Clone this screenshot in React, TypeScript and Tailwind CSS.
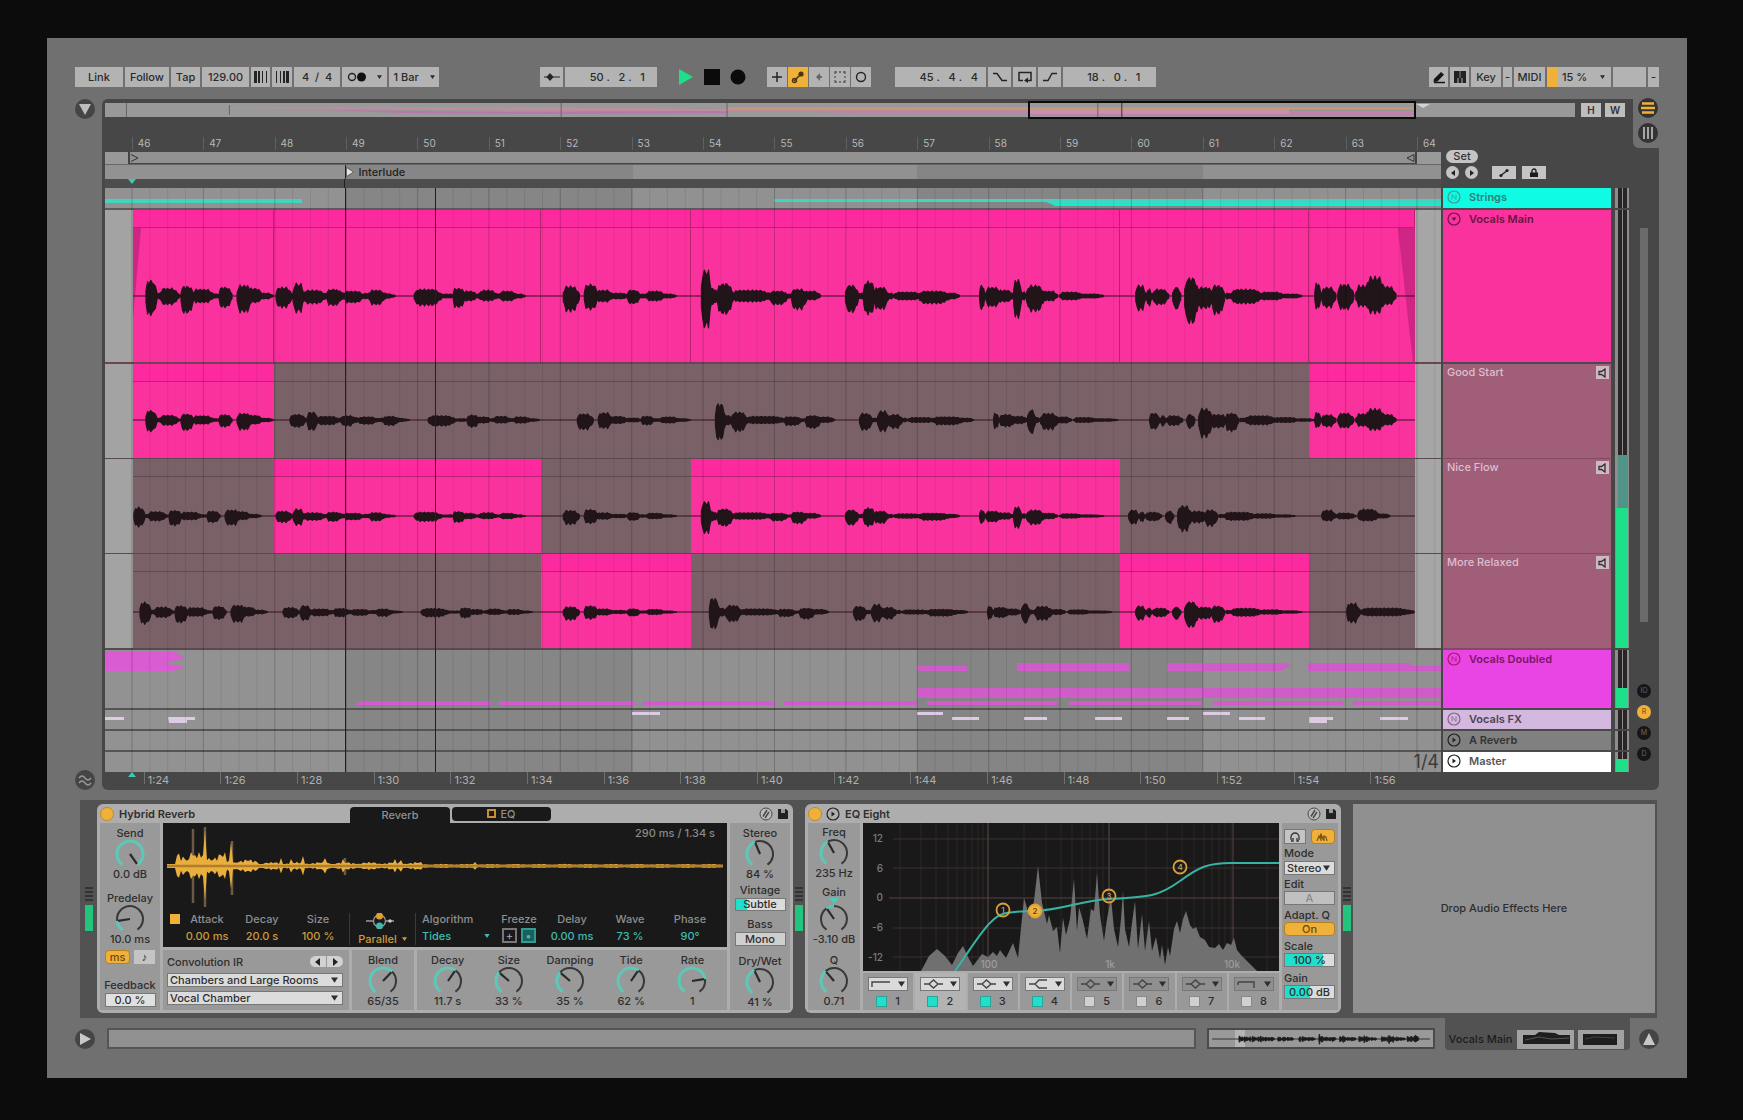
import type { ReactNode } from 'react'
import { clsx } from 'clsx'

const TEAL = '#5cc9b8'
const ORANGE = '#f0b13a'

// Timeline geometry, in units of the arrangement view
const VIEW = 1336
const BAR = 1285 / 18
const FIRST_BAR = 27
const BARS = Array.from({ length: 19 }, (_, i) => 46 + i)
const TIMES = ['1:24', '1:26', '1:28', '1:30', '1:32', '1:34', '1:36', '1:38', '1:40', '1:42', '1:44', '1:46', '1:48', '1:50', '1:52', '1:54', '1:56']

// start, end, height above the centre line, height below it
type Burst = [number, number, number, number]

const MAIN: Burst[] = [
  [13, 24, 16, 20], [23, 48, 3, 3], [27, 46, 8, 9], [48, 61, 10, 18], [60, 81, 7, 7], [80, 88, 2, 2], [86, 99, 9, 12], [104, 119, 11, 17], [112, 130, 8, 7], [126, 140, 3, 3],
  [143, 159, 9, 12], [160, 171, 13, 17], [170, 193, 6, 8], [192, 214, 5, 5], [194, 208, 7, 10], [211, 231, 5, 7], [228, 262, 3, 3], [236, 252, 6, 9],
  [281, 309, 7, 10], [308, 322, 2, 2], [320, 332, 8, 12], [330, 344, 5, 5], [343, 370, 3, 3], [346, 364, 6, 5], [366, 384, 5, 5], [380, 392, 2, 2],
  [430, 446, 10, 16], [451, 465, 12, 14], [463, 480, 6, 6], [478, 495, 3, 3], [494, 507, 6, 8], [506, 516, 2, 2], [513, 532, 5, 5], [528, 543, 2, 2],
  [568, 578, 27, 33], [576, 584, 8, 9], [584, 600, 13, 19], [598, 640, 6, 6], [636, 655, 5, 9], [654, 662, 2, 2], [658, 674, 7, 14], [670, 687, 5, 4],
  [712, 725, 11, 17], [724, 732, 3, 3], [730, 742, 15, 19], [741, 755, 9, 14], [755, 760, 3, 3], [760, 790, 4, 4], [785, 818, 5, 8], [812, 826, 3, 3],
  [846, 851, 11, 14], [852, 868, 9, 11], [864, 880, 6, 6], [880, 888, 17, 23], [887, 893, 4, 4], [893, 911, 11, 16], [909, 924, 5, 5], [926, 950, 4, 4], [945, 970, 2, 2],
  [1002, 1012, 11, 15], [1013, 1018, 7, 10], [1019, 1035, 7, 9], [1039, 1047, 9, 14], [1051, 1065, 19, 29], [1063, 1080, 9, 13], [1078, 1091, 11, 19], [1092, 1098, 3, 3], [1097, 1130, 7, 8], [1126, 1152, 4, 4], [1148, 1168, 2, 2],
  [1181, 1187, 13, 13], [1188, 1202, 9, 12], [1204, 1220, 12, 14], [1222, 1244, 11, 11], [1232, 1252, 20, 18], [1246, 1262, 10, 9],
]

function take(from: number, to: number, shift: number, gain: number): Burst[] {
  return MAIN.filter(b => b[0] >= from && b[0] < to).map(([s, e, u, d]) => [Math.max(0, s + shift), e + shift, u * gain, d * gain])
}

const GOOD: Burst[] = [...take(0, 141, 0, 0.6), ...take(141, 1170, 14, 0.62), ...take(1170, 1281, 0, 0.58)]
const NICE: Burst[] = [...take(0, 141, -12, 0.55), ...take(141, 1000, 0, 0.55), ...take(1000, 1170, -7, 0.55), [1188, 1202, 6, 5], [1202, 1222, 3, 3], [1224, 1246, 7, 5], [1244, 1256, 2, 2]]
const RELAXED: Burst[] = [...take(0, 141, -6, 0.62), ...take(141, 400, 7, 0.5), ...take(400, 560, 0, 0.52), ...take(560, 1000, 8, 0.52), ...take(1000, 1170, 0, 0.55), [1213, 1226, 9, 11], [1225, 1280, 4, 4]]

function wavePath(bursts: Burst[], mid: number) {
  return bursts.map(([s, e, up, down]) => {
    const n = Math.max(5, Math.round((e - s) / 1.5))
    const at = (i: number) => {
      const t = i / n
      const env = Math.min(1, t / 0.2 + 0.35, (1 - t) / 0.4 + 0.25)
      return env * (0.84 + 0.16 * Math.sin(i * 2.3 + s))
    }
    const xs = Array.from({ length: n + 1 }, (_, i) => i)
    const top = xs.map(i => `${(s + ((e - s) * i) / n).toFixed(1)},${(mid - up * at(i)).toFixed(1)}`)
    const bottom = xs.map(i => `${(s + ((e - s) * i) / n).toFixed(1)},${(mid + down * at(i)).toFixed(1)}`).reverse()
    return `M${[...top, ...bottom].join('L')}Z`
  }).join('')
}

const EDGES = [0, 141, 408, 558, 986, 1175, 1281]

function Caret({ className = 'w-[8px] h-[6px]' }: { className?: string }) {
  return <svg viewBox="0 0 8 6" className={clsx('shrink-0', className)}><path d="M0 0h8L4 6z" fill="currentColor" /></svg>
}

function Chip({ className, children, label }: { className?: string; children?: ReactNode; label?: string }) {
  return (
    <button aria-label={label} className={clsx('h-5 shrink-0 flex items-center justify-center whitespace-pre bg-[#b3b3b3] text-[#2b2b2b]', className)}>
      {children}
    </button>
  )
}

function Toolbar() {
  return (
    <header className="flex items-center px-7 text-[11px] font-medium">
      <div className="flex gap-[2px]">
        <Chip className="w-12">Link</Chip>
        <Chip className="w-11">Follow</Chip>
        <Chip className="w-[29px]">Tap</Chip>
        <Chip className="w-[47px]">129.00</Chip>
        <Chip className="w-[19px]" label="Nudge down">
          <svg viewBox="0 0 15 12" className="w-[15px] h-3" fill="#242424"><path d="M1 0h3v12H1zM5 0h2v12H5zM9 0h1v12H9zM13 0h1v12h-1z" /></svg>
        </Chip>
        <Chip className="w-5" label="Nudge up">
          <svg viewBox="0 0 15 12" className="w-[15px] h-3" fill="#242424"><path d="M1 0h1v12H1zM5 0h1v12H5zM8 0h2v12H8zM11 0h3v12h-3z" /></svg>
        </Chip>
        <Chip className="w-[46px]">4  /  4</Chip>
        <Chip className="w-[45px] gap-[10px]" label="Metronome">
          <svg viewBox="0 0 20 10" className="w-5 h-[10px]"><circle cx="5" cy="5" r="3.500" fill="none" stroke="#242424" strokeWidth="1.400" /><circle cx="14.500" cy="5" r="4.500" fill="#111" /></svg>
          <Caret className="w-[5px] h-1" />
        </Chip>
        <Chip className="w-[50px] gap-2">1 Bar <Caret className="w-[5px] h-1" /></Chip>
      </div>

      <div className="grow-[26]" />

      <div className="flex items-center">
        <div className="flex gap-[2px]">
          <Chip className="w-[23px]" label="Follow playhead">
            <svg viewBox="0 0 18 10" className="w-[18px] h-[10px]" fill="#242424"><path d="M1 4.500h16v1H1z" /><path d="M7 1l3.600 4L7 9 3.400 5z" /></svg>
          </Chip>
          <Chip className="w-[92px] pl-3">50 .   2 .   1</Chip>
        </div>
        <div className="flex items-center gap-[10px] px-[21px]">
          <button aria-label="Play"><svg viewBox="0 0 16 16" className="block w-4 h-4"><path d="M1 0l14 8-14 8z" fill="#1ee08a" /></svg></button>
          <button aria-label="Stop"><svg viewBox="0 0 16 16" className="block w-4 h-4"><path d="M0 0h16v16H0z" fill="#0b0b0b" /></svg></button>
          <button aria-label="Record"><svg viewBox="0 0 16 16" className="block w-4 h-4"><circle cx="8" cy="8" r="7.500" fill="#0b0b0b" /></svg></button>
        </div>
        <div className="flex gap-[1px]">
          <Chip className="w-5" label="Overdub"><svg viewBox="0 0 12 12" className="w-3 h-3"><path d="M6 1v10M1 6h10" stroke="#242424" strokeWidth="1.500" /></svg></Chip>
          <Chip className="w-5 !bg-[#f0b13a]" label="Automation arm">
            <svg viewBox="0 0 14 14" className="w-[14px] h-[14px]"><path d="M3 11l8-8" stroke="#4a3510" strokeWidth="1.600" /><circle cx="3.500" cy="10.500" r="2" fill="none" stroke="#4a3510" strokeWidth="1.500" /><circle cx="10" cy="4" r="2.600" fill="#4a3510" /></svg>
          </Chip>
          <Chip className="w-5" label="Re-enable automation"><svg viewBox="0 0 10 10" className="w-[10px] h-[10px]"><path d="M6 1v8L2 5z M6 4h2v2H6z" fill="#666" /></svg></Chip>
          <Chip className="w-5" label="Capture">
            <svg viewBox="0 0 12 12" className="w-3 h-3" fill="none" stroke="#555" strokeWidth="1.300"><path d="M1 3V1h2M9 1h2v2M11 9v2H9M3 11H1V9M5 1h2M5 11h2M1 5v2M11 5v2" /></svg>
          </Chip>
          <Chip className="w-5" label="Session record"><svg viewBox="0 0 12 12" className="w-3 h-3"><circle cx="6" cy="6" r="4.500" fill="none" stroke="#242424" strokeWidth="1.400" /></svg></Chip>
        </div>
        <div className="flex gap-[2px] pl-6">
          <Chip className="w-[91px] pl-4">45 .   4 .   4</Chip>
          <Chip className="w-[23px]" label="Punch in"><svg viewBox="0 0 14 10" className="w-[14px] h-[10px]"><path d="M0 1.500h4l5 7h5" fill="none" stroke="#242424" strokeWidth="1.400" /></svg></Chip>
          <Chip className="w-[23px]" label="Loop"><svg viewBox="0 0 14 12" className="w-[14px] h-3"><path d="M5 9.500H1v-8h12v8h-3" fill="none" stroke="#242424" strokeWidth="1.500" /><path d="M10 6.500v5.500L6 9.500z" fill="#242424" /></svg></Chip>
          <Chip className="w-[23px]" label="Punch out"><svg viewBox="0 0 14 10" className="w-[14px] h-[10px]"><path d="M0 8.500h5l4-7h5" fill="none" stroke="#242424" strokeWidth="1.400" /></svg></Chip>
          <Chip className="w-[93px] pl-2">18 .   0 .   1</Chip>
        </div>
      </div>

      <div className="grow-[70]" />

      <div className="flex gap-[2px]">
        <Chip className="w-[19px]" label="Draw mode"><svg viewBox="0 0 14 14" className="w-[14px] h-[14px]"><path d="M2 9l7-7 3 2.500-6.500 7L1.500 12z" fill="#161616" /><path d="M2 12.500h11" stroke="#161616" strokeWidth="1.500" /></svg></Chip>
        <Chip className="w-[19px]" label="Computer keyboard"><svg viewBox="0 0 14 12" className="w-[14px] h-3"><path d="M1 0h12v12H1z" fill="#222" /><path d="M5 7v5M9 7v5" stroke="#b3b3b3" /><path d="M7 0v7" stroke="#8a8a8a" /></svg></Chip>
        <Chip className="w-[30px]">Key</Chip>
        <Chip className="w-[9px]">-</Chip>
        <Chip className="w-[31px]">MIDI</Chip>
        <Chip className="w-[64px] !justify-start gap-1 pr-[6px]">
          <span className="h-5 w-[11px] bg-[#f0b13a]" />
          <span className="grow text-left">15 %</span>
          <Caret className="w-[5px] h-1" />
        </Chip>
        <Chip className="w-[33px]" label="MIDI activity" />
        <Chip className="w-[11px]">-</Chip>
      </div>
    </header>
  )
}

function RoundButton({ label, children, className }: { label: string; children: ReactNode; className?: string }) {
  return (
    <button aria-label={label} className={clsx('w-5 h-5 shrink-0 rounded-full bg-[#454545] flex items-center justify-center', className)}>
      {children}
    </button>
  )
}

function Overview() {
  return (
    <div className="flex items-start">
      <div className="relative flex-1 h-[14px] bg-[#999]">
        <svg viewBox="0 0 1471 14" preserveAspectRatio="none" className="block w-full h-full">
          <path d="M124 4H456L622 6H925V8H456L124 5z" fill="#c48aa0" opacity=".8" />
          <path d="M220 7L400 9L622 8V10L456 11L300 10z" fill="#c566b4" opacity=".7" />
          <path d="M622 4.500H1310V6H622z" fill="#cf9a7a" />
          <path d="M700 9L925 8V11H800zM925 8H1310V12H925z" fill="#c67db0" opacity=".8" />
          <path d="M925 6h260v5H925z" fill="#cf94ab" opacity=".7" />
          <path d="M21.500 0v14M124.500 2v10M456.500 0v14M622.500 0v14M993.500 0v14" stroke="#666" />
          <path d="M1017.500 0v14" stroke="#333" />
          <path d="M1312 1h14l-7 4z" fill="#d2d2d2" />
        </svg>
        <div className="absolute -top-[2px] h-[18px] left-[62.800%] w-[26.400%] border-2 border-[#0b0b0b]" />
      </div>
      <div className="flex gap-1 pl-[6px] pr-2 text-[10px] leading-[14px] font-semibold text-[#333]">
        <button className="w-5 bg-[#bdbdbd]">H</button>
        <button className="w-5 bg-[#bdbdbd]">W</button>
      </div>
    </div>
  )
}

function Ruler() {
  return (
    <div className="flex h-[15px] text-[10px] leading-[13px] text-[#b8b8b8]">
      <div className="w-[2%] shrink-0" />
      {BARS.map(n => (
        <div key={n} className="shrink-0 w-[5.345%] h-[13px] border-l border-[#606060] pl-[5px]">{n}</div>
      ))}
    </div>
  )
}

function Notes({ height, className, children }: { height: number; className?: string; children?: ReactNode }) {
  return (
    <svg viewBox={`0 0 ${VIEW} ${height}`} preserveAspectRatio="none" className={clsx('block flex-1 h-full', className)}>
      {children}
    </svg>
  )
}

interface LaneProps {
  bursts: Burst[]
  main?: boolean
  active?: number[]
  height: number
  mid: number
}

function Lane({ bursts, main, active = [], height, mid }: LaneProps) {
  return (
    <div className="flex h-full bg-[#a3a3a3]">
      <div className="w-[2.100%] shrink-0" />
      <div className="relative flex flex-1">
        {EDGES.slice(0, -1).map((edge, i) => {
          const on = main || active.includes(i)
          return (
            <div key={edge} style={{ width: `${((EDGES[i + 1] - edge) / 1281) * 100}%` }} className={clsx('h-full', on ? 'bg-[#fa329d]' : 'bg-[#7a6168]', main && 'border-r border-[#b8226f]')}>
              <div className={clsx('h-[18px] border-b', on ? 'bg-[#fd2a9f] border-[#b92375]' : 'border-[#5f4c52]')} />
            </div>
          )
        })}
        <svg viewBox={`0 0 1281 ${height}`} preserveAspectRatio="none" className="absolute inset-0 w-full h-full">
          {main && <path d={`M0 18h8L0 110zM1264 18h17V${height}h-2z`} fill="#cf2686" />}
          <path d={`M0 ${mid}H1281`} stroke="#35101f" strokeWidth="1.200" />
          <path d={wavePath(bursts, mid)} fill="#211519" stroke="#211519" strokeWidth="1.200" strokeLinejoin="round" />
        </svg>
      </div>
      <div className="w-[1.950%] shrink-0 bg-[#a6a6a6]" />
    </div>
  )
}

function Grid() {
  const x = (bar: number) => FIRST_BAR + (bar - 46) * BAR
  const beats = Array.from({ length: 74 }, (_, i) => FIRST_BAR + (i * BAR) / 4)
  return (
    <svg viewBox={`0 0 ${VIEW} 100`} preserveAspectRatio="none" className="absolute inset-0 w-full h-full pointer-events-none">
      <path d={beats.map(b => `M${b.toFixed(1)} 0V100`).join('')} stroke="#000" strokeOpacity=".08" />
      <path d={BARS.map(b => `M${x(b).toFixed(1)} 0V100`).join('')} stroke="#000" strokeOpacity=".12" />
      <path d="M240.500 0V100M330.500 0V100" stroke="#2a1d22" />
    </svg>
  )
}

function TimelineLanes() {
  return (
    <div className="relative bg-[linear-gradient(90deg,#929292_18%,#868686_18%_39.500%,#919191_39.500%_60.800%,#858585_60.800%_82.200%,#919191_82.200%)]">
      <div className="h-[22px] flex border-b-2 border-[#5a5a5a]">
        <Notes height={20}>
          <path d="M0 11h197v4H0zM669 11h277v3H669zM941 11h395v7H951l-10-4z" fill="#3fd6bf" />
          <path d="M946 15h390v3H950z" fill="#10ecd6" />
        </Notes>
      </div>
      <div className="h-[154px] border-b-2 border-[#6b4457]"><Lane main bursts={MAIN} height={152} mid={86} /></div>
      <div className="h-[95px] border-b border-[#5a4a50]"><Lane bursts={GOOD} active={[0, 5]} height={94} mid={56} /></div>
      <div className="h-[95px] border-b border-[#5a4a50]"><Lane bursts={NICE} active={[1, 3]} height={94} mid={57} /></div>
      <div className="h-[96px] border-b-2 border-[#5a4a50]"><Lane bursts={RELAXED} active={[2, 4]} height={94} mid={58} /></div>
      <div className="h-[60px] flex border-b-2 border-[#555]">
        <Notes height={58}>
          <path d="M0 1h68l12 7-20 5 20 4-12 4H0z" fill="#d95cd2" />
          <path d="M250 54l8-3h128v4H250zM394 51h136v4H394zM538 51h132v4H538zM678 51h134v4H678zM822 51h130v4H822zM964 51h132v4H964zM1108 51h130v4H1108zM1248 51h88v4h-88z" fill="#d55ace" />
          <path d="M812 16h50v5h-50zM912 13h112v8H912zM1062 13h116l8 2-10 6h-114zM1203 13h103v3h30v5h-133zM812 38h524v10H812z" fill="#cf5cc8" />
        </Notes>
      </div>
      <div className="h-[21px] flex border-b-2 border-[#555]">
        <Notes height={19}>
          <path d="M0 7h19v3H0zM63 7h27v3h-8v3H64zM527 2h28v3h-28zM812 2h26v3h-26zM847 7h27v3h-27zM919 7h23v3h-23zM990 7h27v3h-27zM1062 7h22v3h-22zM1098 2h27v3h-27zM1134 7h26v3h-26zM1204 7h24v3h-6v3h-18zM1275 7h28v3h-28z" fill="#dccbe2" />
        </Notes>
      </div>
      <div className="h-[21px] border-b-2 border-[#555]" />
      <div className="h-5 text-right text-[18px] leading-5 text-[#3c3c3c] pr-[2px]">1/4</div>
      <Grid />
    </div>
  )
}

function TrackIcon({ kind, color = '#222' }: { kind: 'unfold' | 'wave' | 'play'; color?: string }) {
  return (
    <svg viewBox="0 0 14 14" className="w-[14px] h-[14px] shrink-0" fill="none" stroke={color}>
      <circle cx="7" cy="7" r="6" strokeWidth="1.200" />
      {kind === 'unfold' && <path d="M4.500 5.500h5L7 9z" fill={color} stroke="none" />}
      {kind === 'play' && <path d="M5.500 4.500v5L9 7z" fill={color} stroke="none" />}
      {kind === 'wave' && <path d="M5 4.500v5M5 4.500l4 5M9 4.500v5" strokeWidth=".8" />}
    </svg>
  )
}

function TrackHeader({ name, icon, color, className }: { name: string; icon: 'unfold' | 'wave' | 'play'; color?: string; className: string }) {
  return (
    <div className={clsx('flex items-start gap-2 pl-1 pt-[1px] border-[#4a4a4a] text-[11px] leading-[16px] font-semibold', className)}>
      <button aria-label={`Unfold ${name}`} className="pt-[1px]"><TrackIcon kind={icon} color={color} /></button>
      <span>{name}</span>
    </div>
  )
}

function TakeHeader({ name, className }: { name: string; className: string }) {
  return (
    <div className={clsx('flex items-start justify-between pl-1 pr-[2px] bg-[#a05e78] border-[#804a62] text-[11px] leading-[16px] font-medium text-[#dcbfd0]', className)}>
      <span>{name}</span>
      <button aria-label={`Audition ${name}`} className="w-[13px] h-[13px] mt-[2px] bg-[#cdb9c2] flex items-center justify-center">
        <svg viewBox="0 0 10 10" className="w-[10px] h-[10px]"><path d="M1 3.500h2.500L7 1v8L3.500 6.500H1z" fill="none" stroke="#3b2a32" strokeWidth="1.300" /></svg>
      </button>
    </div>
  )
}

function Meter({ className, level = 0, peak = 0 }: { className: string; level?: number; peak?: number }) {
  return (
    <div className={clsx('border-[#474747]', className)}>
      <div className="relative h-full bg-[#8d8d8d] pl-[3px] pr-[2px] flex gap-[1px]">
        <span className="flex-1 bg-[#2a2424]" />
        <span className="flex-1 bg-[#2a2424]" />
        <span style={{ height: `${peak}%` }} className="absolute bottom-0 left-[3px] right-[1px] bg-[#4f9486]" />
        <span style={{ height: `${level}%` }} className="absolute bottom-0 inset-x-[1px] bg-[#1ee08a]" />
      </div>
    </div>
  )
}

function TrackHeaders() {
  return (
    <div className="w-[168px] shrink-0">
      <div className="h-9 flex flex-col items-start gap-[3px] pl-[3px]">
        <button className="h-[13px] w-8 -mt-[2px] rounded-full bg-[#c4c4c4] text-[11px] leading-[13px] font-medium text-[#333]">Set</button>
        <div className="flex items-center">
          {['Previous', 'Next'].map((n, i) => (
            <button key={n} aria-label={`${n} locator`} className="w-[13px] h-[13px] mr-[6px] rounded-full bg-[#c4c4c4] flex items-center justify-center">
              <svg viewBox="0 0 8 8" className="w-2 h-2"><path d={i ? 'M2 1l4 3-4 3z' : 'M6 1L2 4l4 3z'} fill="#222" /></svg>
            </button>
          ))}
          <button aria-label="Automation mode" className="w-6 h-[13px] ml-2 bg-[#c4c4c4] flex items-center justify-center">
            <svg viewBox="0 0 12 10" className="w-3 h-[10px]"><path d="M2 8l8-6" stroke="#222" strokeWidth="1.300" /><circle cx="3" cy="7.500" r="1.600" fill="#222" /><circle cx="9" cy="2.500" r="1.600" fill="#222" /></svg>
          </button>
          <button aria-label="Lock envelopes" className="w-6 h-[13px] ml-[6px] bg-[#c4c4c4] flex items-center justify-center">
            <svg viewBox="0 0 10 10" className="w-[10px] h-[10px]"><path d="M1 4.500h8V9H1z" fill="#1c1c1c" /><path d="M3 5V3a2 2 0 014 0v2" fill="none" stroke="#1c1c1c" strokeWidth="1.300" /></svg>
          </button>
        </div>
      </div>
      <TrackHeader name="Strings" icon="wave" color="#3f9c90" className="h-[22px] border-b-2 bg-[#10fbe4] text-[#2c8078]" />
      <TrackHeader name="Vocals Main" icon="unfold" color="#6c1444" className="h-[154px] border-b-2 bg-[#fa329d] text-[#6c1444]" />
      <TakeHeader name="Good Start" className="h-[95px] border-b" />
      <TakeHeader name="Nice Flow" className="h-[95px] border-b" />
      <TakeHeader name="More Relaxed" className="h-[96px] border-b-2" />
      <TrackHeader name="Vocals Doubled" icon="wave" color="#a8186c" className="h-[60px] border-b-2 bg-[#e945e4] text-[#7c1668]" />
      <TrackHeader name="Vocals FX" icon="wave" color="#8a5f86" className="h-[21px] border-b-2 bg-[#d3b9e0] text-[#4e4353]" />
      <TrackHeader name="A Reverb" icon="play" className="h-[21px] border-b-2 bg-[#808080] text-[#333]" />
      <TrackHeader name="Master" icon="play" className="h-5 bg-white text-[#555]" />
    </div>
  )
}

function Arrangement() {
  return (
    <section className="flex pl-7 pr-7 mt-3">
      <div className="w-[27px] shrink-0 flex flex-col justify-between">
        <RoundButton label="Hide browser">
          <svg viewBox="0 0 12 12" className="w-3 h-3"><path d="M0 1h12L6 12z" fill="#bdbdbd" /></svg>
        </RoundButton>
        <RoundButton label="Follow behaviour">
          <svg viewBox="0 0 14 12" className="w-[14px] h-3" fill="none" stroke="#999" strokeWidth="1.300"><path d="M1 4q3-4 6 0t6 0M1 9q3-4 6 0t6 0" /></svg>
        </RoundButton>
      </div>
      <div className="flex-1 min-w-0 bg-[#474747] rounded-md">
        <div className="flex items-start">
          <div className="flex-1 min-w-0 pl-[3px] pt-[4px]">
            <Overview />
            <div className="mt-5 w-full flex">
              <div className="flex-1 min-w-0"><Ruler /></div>
              <div className="w-[192px] shrink-0" />
            </div>
          </div>
          <div className="w-[26px] h-[49px] shrink-0 pl-[5px] flex flex-col gap-[5px] bg-[#707070] rounded-bl-md">
            <RoundButton label="Arrangement view" className="!bg-[#333] -mt-[1px]">
              <svg viewBox="0 0 14 12" className="w-[14px] h-3"><path d="M1 1.500h12M0 6h14M1 10.500h12" stroke={ORANGE} strokeWidth="2.600" /></svg>
            </RoundButton>
            <RoundButton label="Session view" className="!bg-[#333]">
              <svg viewBox="0 0 12 12" className="w-3 h-3"><path d="M2 0v12M6 0v12M10 0v12" stroke="#a5a5a5" strokeWidth="2" /></svg>
            </RoundButton>
          </div>
        </div>

        <div className="flex pl-[3px]">
          <div className="flex-1 min-w-0">
            <div className="h-3 flex bg-[#999] text-[#333]">
              <div className="w-[1.700%] shrink-0" />
              <div className="flex-1 flex items-center justify-between border-x-2 border-b border-[#444] bg-[#929292]">
                <svg viewBox="0 0 10 10" className="w-[10px] h-[10px]"><path d="M1 1.500L8 5 1 8.500" fill="none" stroke="#333" /></svg>
                <svg viewBox="0 0 10 10" className="w-[10px] h-[10px]"><path d="M9 1.500L2 5l7 3.500z" fill="none" stroke="#333" /></svg>
              </div>
              <div className="w-[1.800%] shrink-0" />
            </div>
            <div className="h-[15px] flex items-center border-t border-[#666] bg-[linear-gradient(90deg,#929292_18%,#868686_18%_39.500%,#919191_39.500%_60.800%,#858585_60.800%_82.200%,#919191_82.200%)]">
              <div className="w-[18%] shrink-0" />
              <div className="h-full flex items-center gap-1 border-l border-[#222] text-[11px] font-medium text-[#222]">
                <svg viewBox="0 0 8 10" className="w-2 h-[10px]"><path d="M.500.500L7.500 5 .500 9.500z" fill="#e4e4e4" stroke="#333" strokeWidth=".6" /></svg>
                Interlude
              </div>
            </div>
            <div className="h-[9px] bg-[#4d4d4d] flex">
              <div className="w-[1.700%] shrink-0" />
              <svg viewBox="0 0 8 5" className="w-2 h-[5px]"><path d="M0 0h8L4 5z" fill="#35cdb8" /></svg>
              <div className="w-[15.700%] shrink-0 border-r border-[#222]" />
            </div>
            <TimelineLanes />
            <div className="h-[18px] flex text-[11px] leading-4 text-[#b0b0b0] overflow-hidden">
              <div className="w-[2.900%] shrink-0 flex justify-center">
                <svg viewBox="0 0 8 5" className="w-2 h-[5px] ml-4"><path d="M0 5h8L4 0z" fill="#35cdb8" /></svg>
              </div>
              {TIMES.map(t => (
                <div key={t} className="w-[5.740%] shrink-0 h-3 border-l border-[#707070] pl-[3px]">{t}</div>
              ))}
            </div>
          </div>
          <div className="w-[2px] shrink-0" />
          <TrackHeaders />
          <div className="w-[14px] ml-1 mt-9 shrink-0">
            <Meter className="h-[22px] border-b-2" />
            <Meter className="h-[440px] border-b-2" level={32} peak={44} />
            <Meter className="h-[60px] border-b-2" level={34} />
            <Meter className="h-[21px] border-b-2" />
            <Meter className="h-[21px] border-b-2" />
            <Meter className="h-5" level={65} />
          </div>
          <div className="w-[30px] shrink-0 flex flex-col items-center pt-[76px] pb-[29px]">
            <div className="w-[8px] h-[394px] bg-[#6b6b6b]" />
            <div className="flex-1" />
            <div className="flex flex-col gap-[7px]">
              {['IO', 'R', 'M', 'D'].map(c => (
                <button key={c} className={clsx('w-[14px] h-[14px] rounded-full text-[7px] leading-[14px] text-center', c === 'R' ? 'bg-[#f0b13a] text-[#6b4a10]' : 'bg-[#161616] text-[#666]')}>{c}</button>
              ))}
            </div>
          </div>
        </div>
      </div>
    </section>
  )
}

function arc(from: number, to: number, r = 13) {
  const p = (a: number) => {
    const rad = ((a - 90) * Math.PI) / 180
    return `${(15 + r * Math.cos(rad)).toFixed(2)} ${(15 + r * Math.sin(rad)).toFixed(2)}`
  }
  return `M${p(from)}A${r} ${r} 0 ${Math.abs(to - from) > 180 ? 1 : 0} 1 ${p(to)}`
}

// value runs 0..1 over 290 degrees of travel
function Knob({ label, text, value, kind }: { label: string; text: string; value: number; kind?: 'bipolar' }) {
  const angle = -145 + value * 290
  const rad = ((angle - 90) * Math.PI) / 180
  return (
    <label className="flex flex-col items-center text-[11px] leading-3 font-medium text-[#2e2e2e] whitespace-nowrap">
      {label}
      <span className="relative block w-[30px] h-[29px]">
        <svg viewBox="0 0 30 29" className="block w-[30px] h-[29px]" fill="none">
          {kind === 'bipolar' ? (
            <>
              <path d={arc(-145, angle)} stroke="#383838" strokeWidth="2" />
              <path d={arc(0, 145)} stroke="#383838" strokeWidth="2" />
              <path d={arc(angle, 0)} stroke="#48cdb8" strokeWidth="2.800" />
            </>
          ) : (
            <>
              {value < 0.98 && <path d={arc(angle, 145)} stroke="#383838" strokeWidth="2" />}
              <path d={arc(-145, angle)} stroke={TEAL} strokeWidth="3" />
            </>
          )}
          <path d={`M15 15L${(15 + 12 * Math.cos(rad)).toFixed(1)} ${(15 + 12 * Math.sin(rad)).toFixed(1)}`} stroke="#2a2a2a" strokeWidth="2.200" />
        </svg>
        <input type="range" min={0} max={1} step={0.01} defaultValue={value} className="absolute inset-0 w-full h-full opacity-0" />
      </span>
      {text}
    </label>
  )
}

function TitleIcons() {
  return (
    <div className="flex items-center gap-1">
      <button aria-label="Hot-swap preset">
        <svg viewBox="0 0 14 14" className="block w-[14px] h-[14px]" fill="none" stroke="#4a4a4a"><circle cx="7" cy="7" r="6" fill="#bbb" /><path d="M4 9.500L8 3M6 11l4-6" strokeWidth="1.500" /></svg>
      </button>
      <button aria-label="Save preset">
        <svg viewBox="0 0 12 12" className="block w-3 h-3"><path d="M1 1h8l2 2v8H1z" fill="#222" /><path d="M4 1h4v4H4z" fill="#999" /></svg>
      </button>
    </div>
  )
}

function irPath() {
  const spikes: Record<number, number> = { 28: 14, 42: 36, 68: 24, 118: 8, 128: 7, 140: 10, 162: 8, 180: 7, 232: 7, 238: 6, 312: 4 }
  let top = ''
  let bottom = ''
  for (let x = 4; x <= 560; x += 2) {
    const noise = Math.abs(Math.sin(x * 1.7) * Math.cos(x * 0.61))
    const body = x < 14 ? 2 : x < 64 ? 5 + noise * 9 : x < 96 ? 3 + noise * 4 : x < 260 ? 1.8 + noise * 2.4 : 1.2 + noise
    const h = spikes[x] ?? body
    top += `L${x} ${(43 - h).toFixed(1)}`
    bottom = `L${x} ${(43 + h * 0.95).toFixed(1)}` + bottom
  }
  return `M4 43${top}${bottom}Z`
}

function Param({ label, value, color, className = 'w-[60px]' }: { label: string; value: ReactNode; color: string; className?: string }) {
  return (
    <div className={clsx('flex flex-col items-center gap-[3px]', className)}>
      <span className="text-[#8e8e8e]">{label}</span>
      <span className={clsx('flex items-center whitespace-nowrap h-[15px]', color)}>{value}</span>
    </div>
  )
}

function DeviceMeter({ className }: { className: string }) {
  return (
    <div className={clsx('shrink-0 flex flex-col items-center pt-[82px]', className)}>
      <svg viewBox="0 0 8 17" className="w-2 h-[17px]"><path d="M0 2h8M0 6h8M0 10h8M0 14h8" stroke="#333" strokeWidth="2" /></svg>
      <div className="mt-[2px] w-[8px] h-[26px] bg-[#22c47e]" />
    </div>
  )
}

function SelectBox({ label, options, className }: { label: string; options: string[]; className?: string }) {
  return (
    <div className={clsx('flex items-center bg-[#dcdcdc] border border-[#777] text-[#2e2e2e]', className)}>
      <select aria-label={label} className="appearance-none flex-1 min-w-0 h-full pl-[2px] bg-transparent outline-none">
        {options.map(o => <option key={o}>{o}</option>)}
      </select>
      <Caret className="w-[7px] h-[6px] mr-1" />
    </div>
  )
}

function HybridReverb() {
  return (
    <article className="w-[696px] shrink-0 rounded-md bg-[#adadad] text-[11px] leading-3 font-medium text-[#2e2e2e]">
      <div className="h-[19px] flex items-center pl-[3px] pr-1">
        <button aria-label="Device on" className="w-[14px] h-[14px] rounded-full bg-[#f0b13a] border border-[#c58a1c]" />
        <h2 className="pl-[5px] w-[236px] font-semibold">Hybrid Reverb</h2>
        <button className="w-[100px] h-4 self-end rounded-t bg-[#191919] text-[#909090]">Reverb</button>
        <button className="ml-[2px] w-[99px] h-[14px] rounded bg-[#191919] text-[#909090] flex items-center justify-center gap-1">
          <span className="w-[9px] h-[9px] border-2 border-[#c98e32]" />EQ
        </button>
        <span className="flex-1" />
        <TitleIcons />
      </div>
      <div className="flex px-[3px] pb-[3px] gap-[3px] h-[190px]">
        <div className="w-[60px] flex flex-col items-center bg-[#999] pt-1">
          <Knob label="Send" text="0.0 dB" value={1} />
          <div className="h-3" />
          <Knob label="Predelay" text="10.0 ms" value={0.16} />
          <div className="flex gap-1 mt-[5px]">
            <button className="w-[25px] h-[14px] leading-[13px] rounded-sm bg-[#f0b13a] border border-[#b5801f] text-[#6b4a10]">ms</button>
            <button className="w-[21px] h-[14px] leading-[13px] bg-[#c4c4c4]">♪</button>
          </div>
          <label htmlFor="feedback" className="mt-[15px]">Feedback</label>
          <input id="feedback" defaultValue="0.0 %" className="mt-[2px] w-[51px] h-[14px] bg-[#e0e0e0] border border-[#777] text-center" />
        </div>

        <div className="w-[564px]">
          <div className="h-[124px] bg-[#191919] flex flex-col">
            <div className="relative h-[90px]">
              <svg viewBox="0 0 564 86" className="block w-[564px] h-[86px]">
                <path d="M30 6v74M42 4v80M69 18v54M182 35v17" stroke="#8f7658" strokeWidth="2.500" opacity=".7" />
                <path d={irPath()} fill="#eaae3d" />
                <path d="M4 43H560" stroke="#b07f2c" strokeWidth="2.500" />
              </svg>
              <span className="absolute right-3 top-1 text-[#8a8a8a]">290 ms / 1.34 s</span>
            </div>
            <div className="flex">
              <div className="w-[186px] flex pl-[7px]">
                <span className="w-[10px] h-[10px] mt-[1px] bg-[#f0b13a]" />
                <Param label="Attack" value="0.00 ms" color="text-[#cf9b3d]" className="w-[54px]" />
                <Param label="Decay" value="20.0 s" color="text-[#cf9b3d]" className="w-14" />
                <Param label="Size" value="100 %" color="text-[#cf9b3d]" className="w-14" />
              </div>
              <div className="w-[67px] h-8 border-x border-[#3a3a3a] flex flex-col items-center justify-between">
                <svg viewBox="0 0 30 16" className="w-[30px] h-4 -ml-[6px]" fill="none" stroke="#999" strokeWidth="1.300"><path d="M1 8h7M21 8h8" /><circle cx="14.500" cy="8" r="6" /><circle cx="14.500" cy="3" r="3.500" fill="#e0a030" stroke="none" /><circle cx="14.500" cy="13" r="3.500" fill="#3fb8b0" stroke="none" /><circle cx="25" cy="8" r="1.800" fill="#ccc" stroke="none" /></svg>
                <button className="flex items-center gap-[5px] text-[#cf9b3d]">Parallel <Caret className="w-[5px] h-1" /></button>
              </div>
              <div className="w-[74px] pl-[6px] flex flex-col gap-[3px]">
                <span className="text-[#8e8e8e]">Algorithm</span>
                <button className="h-[15px] flex items-center justify-between text-[#3fbcb0]">Tides <Caret className="w-[6px] h-1" /></button>
              </div>
              <Param label="Freeze" color="text-[#3fbcb0]" className="w-[58px]" value={
                <span className="flex gap-1">
                  <button aria-label="Freeze in" className="w-[15px] h-[15px] border-2 border-[#777] flex items-center justify-center text-[#999]">+</button>
                  <button aria-label="Freeze" className="w-[15px] h-[15px] border-2 border-[#2f9c92] bg-[#1d5f5a] flex items-center justify-center">•</button>
                </span>
              } />
              <Param label="Delay" value="0.00 ms" color="text-[#3fbcb0]" className="w-[48px]" />
              <Param label="Wave" value="73 %" color="text-[#3fbcb0]" className="w-[68px]" />
              <Param label="Phase" value="90°" color="text-[#3fbcb0]" className="w-[52px]" />
            </div>
          </div>
          <div className="mt-[3px] h-[60px] flex gap-[3px]">
            <div className="w-[186px] bg-[#999] pl-1 pr-[6px] pt-1 flex flex-col gap-[4px]">
              <div className="flex items-center justify-between h-[15px]">
                <span>Convolution IR</span>
                <span className="flex gap-[1px]">
                  <button aria-label="Previous IR" className="w-4 h-[11px] rounded-l-full bg-[#d2d2d2] flex items-center justify-center"><svg viewBox="0 0 6 8" className="w-[6px] h-2"><path d="M5 0v8L0 4z" fill="#222" /></svg></button>
                  <button aria-label="Next IR" className="w-4 h-[11px] rounded-r-full bg-[#d2d2d2] flex items-center justify-center"><svg viewBox="0 0 6 8" className="w-[6px] h-2"><path d="M1 0v8l5-4z" fill="#222" /></svg></button>
                </span>
              </div>
              <SelectBox label="IR category" options={['Chambers and Large Rooms']} className="h-[14px]" />
              <SelectBox label="IR" options={['Vocal Chamber']} className="h-[14px]" />
            </div>
            <div className="w-[62px] bg-[#999] pt-1"><Knob label="Blend" text="65/35" value={0.65} /></div>
            <div className="flex-1 bg-[#999] pt-1 pr-1 grid grid-cols-5">
              <Knob label="Decay" text="11.7 s" value={0.62} />
              <Knob label="Size" text="33 %" value={0.33} />
              <Knob label="Damping" text="35 %" value={0.33} />
              <Knob label="Tide" text="62 %" value={0.62} />
              <Knob label="Rate" text="1" value={0.78} />
            </div>
          </div>
        </div>

        <div className="w-[60px] flex flex-col items-center bg-[#999] pt-1">
          <Knob label="Stereo" text="84 %" value={0.42} />
          <span className="mt-1">Vintage</span>
          <button className="mt-[2px] w-[51px] h-[13px] border border-[#777] bg-[linear-gradient(90deg,#1fe0cd_22%,#dcdcdc_22%)] leading-[11px]">Subtle</button>
          <span className="mt-[7px]">Bass</span>
          <button className="mt-[2px] w-[51px] h-[14px] border border-[#777] bg-[#cfcfcf] leading-3">Mono</button>
          <div className="h-[9px]" />
          <Knob label="Dry/Wet" text="41 %" value={0.41} />
        </div>
      </div>
    </article>
  )
}

const BELL = 'M1 6h5M15 6h5M6 6l4.500-4L15 6l-4.500 4z'
const BAND_SHAPES = ['M1 9V4h18', BELL, BELL, 'M1 6h6l4-4h8M7 6l4 4h8', BELL, BELL, BELL, 'M1 4h16v6M1 4v3']

const SPECTRUM = [
  [58, 148], [66, 133], [74, 126], [82, 133], [89, 142], [95, 130], [100, 123], [105, 134], [110, 143], [119, 131], [125, 134], [130, 129], [134, 133], [137, 127], [143, 135], [150, 120],
  [155, 135], [158, 105], [161, 75], [167, 95], [171, 78], [175, 43], [179, 80], [184, 101], [186, 92], [190, 108], [194, 104], [197, 130], [200, 95], [203, 112], [207, 96],
  [211, 56], [214, 108], [216, 84], [220, 98], [224, 116], [228, 86], [231, 88], [234, 50], [237, 92], [241, 118], [244, 96], [248, 75], [251, 106], [255, 124], [258, 96], [260, 68], [262, 106],
  [266, 124], [269, 100], [272, 78], [275, 126], [279, 91], [282, 128], [286, 98], [289, 128], [293, 114], [297, 136], [299, 122], [302, 142], [305, 124], [307, 133], [311, 106],
  [314, 98], [317, 110], [320, 96], [323, 88], [327, 102], [330, 106], [333, 104], [337, 114], [342, 117], [346, 124], [352, 125], [356, 121], [360, 127], [364, 120],
  [368, 122], [371, 115], [374, 127], [378, 132], [382, 136], [386, 140], [394, 148],
]

const NODES = [[140, 87], [172, 88], [246, 73], [317, 44]]
const DECADES = [37, 58, 73, 85, 94, 102, 109, 115, 120, 125, 161, 183, 198, 209, 219, 227, 234, 240, 246, 283, 304, 319, 331, 341, 349, 356, 362, 368, 404]

function EqDisplay() {
  return (
    <svg viewBox="0 0 416 148" className="block w-[416px] h-[148px] bg-[#191919] text-[10px]">
      <path d={DECADES.map(x => `M${x} 0V148`).join('')} stroke="#2e2727" />
      <path d="M30 16H416M30 45H416M30 105H416M30 134H416" stroke="#3d3030" />
      <path d="M26 75H416M125 0V148M246 0V148M370 0V148" stroke="#564242" />
      <path d={`M${SPECTRUM.map(p => p.join(' ')).join('L')}Z`} fill="#707070" />
      <g fill="#7c7c7c" textAnchor="end">
        <text x="20" y="19">12</text>
        <text x="20" y="49">6</text>
        <text x="20" y="78">0</text>
        <text x="20" y="108">-6</text>
        <text x="20" y="138">-12</text>
      </g>
      <g fill="#9c9c9c" textAnchor="middle">
        <text x="126" y="145">100</text>
        <text x="247" y="145">1k</text>
        <text x="369" y="145">10k</text>
      </g>
      <path d="M92 148C105 130 118 108 128 99C138 88 148 89 172 88C200 87 220 77 246 76C285 74 295 74 317 58C336 44 345 40 368 40H416" fill="none" stroke="#37b3a4" strokeWidth="2" />
      {NODES.map(([x, y], i) => (
        <g key={i}>
          <circle cx={x} cy={y} r="6.500" fill={i === 1 ? ORANGE : 'none'} stroke="#dba03a" strokeWidth="1.800" />
          <text x={x} y={y + 3} textAnchor="middle" fontSize="8" fill={i === 1 ? '#5b4010' : '#c9a36a'}>{i + 1}</text>
        </g>
      ))}
    </svg>
  )
}

function EqEight() {
  return (
    <article className="w-[536px] shrink-0 rounded-md bg-[#adadad] text-[11px] leading-3 font-medium text-[#2e2e2e]">
      <div className="h-[19px] flex items-center pl-[3px] pr-1">
        <button aria-label="Device on" className="w-[14px] h-[14px] rounded-full bg-[#f0b13a] border border-[#c58a1c]" />
        <button aria-label="Expand display" className="pl-1"><TrackIcon kind="play" /></button>
        <h2 className="pl-[5px] flex-1 font-semibold">EQ Eight</h2>
        <TitleIcons />
      </div>
      <div className="flex px-[3px] pb-[3px] gap-[3px] h-[190px]">
        <div className="w-[52px] flex flex-col items-center bg-[#999] pt-[3px]">
          <Knob label="Freq" text="235 Hz" value={0.4} />
          <div className="h-[7px]" />
          <div className="flex flex-col items-center">
            <span className="block">Gain</span>
            <svg viewBox="0 0 10 6" className="w-[10px] h-[6px]"><path d="M0 0h10L5 6z" fill="#48cdb8" /></svg>
            <Knob label="" text="-3.10 dB" value={0.38} kind="bipolar" />
          </div>
          <div className="h-[9px]" />
          <Knob label="Q" text="0.71" value={0.36} />
        </div>
        <div className="w-[416px] flex flex-col">
          <EqDisplay />
          <div className="mt-[2px] flex-1 grid grid-cols-8 gap-[2px]">
            {BAND_SHAPES.map((d, i) => (
              <div key={i} className={clsx('flex flex-col items-center gap-[4px] pt-[4px]', i === 1 ? 'bg-[#b3b3b3]' : 'bg-[#999]')}>
                <button aria-label={`Band ${i + 1} filter type`} className={clsx('w-10 h-[14px] border border-[#777] flex items-center justify-between px-[2px]', i < 4 ? 'bg-[#dadada]' : 'bg-[#8f8f8f]')}>
                  <svg viewBox="0 0 21 12" className="w-[21px] h-3"><path d={d} fill="none" stroke="#444" strokeWidth="1.400" /></svg>
                  <Caret className="w-[7px] h-[6px]" />
                </button>
                <label className="flex items-center gap-2">
                  <input type="checkbox" defaultChecked={i < 4} className="appearance-none w-[11px] h-[11px] bg-[#d0d0d0] border border-[#888] checked:bg-[#1fe0cd] checked:border-[#2fa195]" />
                  {i + 1}
                </label>
              </div>
            ))}
          </div>
        </div>
        <div className="w-[56px] pl-[2px] pt-[6px] flex flex-col bg-[#999]">
          <div className="flex gap-[5px]">
            <button aria-label="Audition" className="w-[22px] h-[15px] bg-[#c4c4c4] border border-[#777] flex items-center justify-center">
              <svg viewBox="0 0 12 10" className="w-3 h-[10px]"><path d="M2 8V5a4 4 0 018 0v3M2 9h2V6M10 9H8V6" fill="none" stroke="#333" strokeWidth="1.300" /></svg>
            </button>
            <button aria-label="Analyze" className="w-[24px] h-[15px] rounded-sm bg-[#f0b13a] border border-[#b5801f] flex items-center justify-center">
              <svg viewBox="0 0 14 8" className="w-[14px] h-2"><path d="M1 8l2-5 1 2 1-4 2 5 1-3 2 1 1 4M5 8V3M8 8V4" fill="none" stroke="#7a5310" strokeWidth="1.200" /></svg>
            </button>
          </div>
          <span className="mt-[3px]">Mode</span>
          <SelectBox label="Mode" options={['Stereo']} className="w-[51px] h-[14px] mt-[2px]" />
          <span className="mt-[3px]">Edit</span>
          <button className="w-[51px] h-[14px] mt-[1px] bg-[#c0c0c0] border border-[#777] text-[#888]">A</button>
          <span className="mt-[4px]">Adapt. Q</span>
          <button className="w-[51px] h-[14px] mt-[1px] rounded-sm bg-[#f0b13a] border border-[#b5801f] text-[#6b4a10]">On</button>
          <label htmlFor="scale" className="mt-[4px]">Scale</label>
          <input id="scale" defaultValue="100 %" className="w-[51px] h-[14px] mt-[1px] border border-[#777] text-center bg-[linear-gradient(90deg,#1fe0cd_78%,#dcdcdc_78%)]" />
          <label htmlFor="gain" className="mt-[5px]">Gain</label>
          <input id="gain" defaultValue="0.00 dB" className="w-[51px] h-[14px] mt-[1px] border border-[#777] text-center bg-[linear-gradient(90deg,#1fe0cd_52%,#dcdcdc_52%)]" />
        </div>
      </div>
    </article>
  )
}

function StatusBar() {
  const clip: Burst[] = MAIN.map(([s, e, u, d]) => [28 + s * 0.144, 28 + e * 0.144, 1 + u * 0.15, 1 + d * 0.13])
  return (
    <footer className="flex h-8 pl-7 pr-7 text-[11px]">
      <RoundButton label="Show help" className="mt-[11px]">
        <svg viewBox="0 0 12 12" className="w-3 h-3"><path d="M1 0l11 6-11 6z" fill="#c8c8c8" /></svg>
      </RoundButton>
      <div className="mt-[10px] ml-3 mr-[2px] flex-1 h-[21px] border-2 border-[#555] bg-[#919191]" />
      <div className="mt-[10px] ml-[9px] w-[228px] h-[21px] border-2 border-[#4a4a4a] bg-[#999]">
        <svg viewBox="0 0 224 17" className="block w-[224px] h-[17px]">
          <path d="M26 0h10v17H26z" fill="#b5b5b5" />
          <path d="M3 9H221" stroke="#333" />
          <path d={wavePath(clip, 9)} fill="#1c1c1c" stroke="#1c1c1c" strokeWidth=".8" />
        </svg>
      </div>
      <button className="ml-[10px] w-[185px] flex items-center gap-1 pl-[3px] pt-[11px] pb-[1px] rounded-b bg-[#525252] font-medium text-[#1c1c1c]">
        <span className="w-[65px] shrink-0 whitespace-nowrap">Vocals Main</span>
        <svg viewBox="0 0 57 19" className="w-[57px] h-[19px] shrink-0"><path d="M0 0h57v19H0z" fill="#a2a2a2" /><path d="M6 5h12l4-3 16 1 4 2h11v9H6z" fill="#1e1e1e" /><path d="M8 10l14-3 12 2 18-1" stroke="#555" fill="none" /></svg>
        <svg viewBox="0 0 46 19" className="w-[46px] h-[19px] shrink-0"><path d="M0 0h46v19H0z" fill="#a2a2a2" /><path d="M5 4h34v11H5z" fill="#1e1e1e" /><path d="M7 9l10-2 20 1" stroke="#444" fill="none" /></svg>
      </button>
      <RoundButton label="Hide device view" className="mt-[11px] ml-[9px]">
        <svg viewBox="0 0 12 12" className="w-3 h-3"><path d="M6 0l6 12H0z" fill="#c8c8c8" /></svg>
      </RoundButton>
    </footer>
  )
}

export default function App() {
  return (
    <div className="min-h-screen flex flex-col bg-[#0c0c0c] pt-[38px] pr-14 pb-[42px] pl-[47px] font-['Inter','Noto_Sans',sans-serif]">
      <main className="flex-1 bg-[#707070] pt-[29px]">
        <Toolbar />
        <Arrangement />
        <section className="mt-[10px] ml-[33px] mr-[30px] flex bg-[#525252] pt-1 pb-[5px] pr-[2px]">
          <DeviceMeter className="w-[17px]" />
          <HybridReverb />
          <DeviceMeter className="w-3" />
          <EqEight />
          <DeviceMeter className="w-3" />
          <div className="flex-1 bg-[#909090] flex items-center justify-center text-[11px] font-medium text-[#2e2e2e]">Drop Audio Effects Here</div>
        </section>
        <StatusBar />
      </main>
    </div>
  )
}
